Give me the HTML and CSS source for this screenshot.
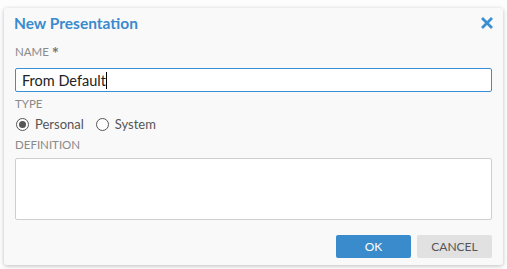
FILE: index.html
```html
<!DOCTYPE html>
<html>
<head>
<meta charset="utf-8">
<link rel="stylesheet" href="styles.css">
</head>
<body>
<div class="backdrop">
  <div class="dialog">
    <div class="header">
      <h1 class="title">New Presentation</h1>
      <button class="close" aria-label="Close">
        <svg width="12" height="12" viewBox="0 0 12 12"><path d="M2 2 L10 10 M10 2 L2 10" stroke="#3a8fd3" stroke-width="2.8" stroke-linecap="square"/></svg>
      </button>
    </div>
    <div class="body">
      <div class="label">NAME <span class="req">*</span></div>
      <div class="input"><span class="value">From Default</span><span class="caret"></span></div>
      <div class="label gap-top">TYPE</div>
      <div class="radios">
        <label class="radio"><span class="circle checked"></span>Personal</label>
        <label class="radio"><span class="circle"></span>System</label>
      </div>
      <div class="label gap-top2">DEFINITION</div>
      <div class="textarea"></div>
    </div>
    <div class="footer">
      <button class="btn ok">OK</button>
      <button class="btn cancel">CANCEL</button>
    </div>
  </div>
</div>
</body>
</html>
```
FILE: styles.css
```css
html, body {
  margin: 0;
  padding: 0;
  background: #fdfdfd;
  font-family: Lato, "Open Sans", sans-serif;
}
.backdrop {
  padding: 8px 4px 4px 4px;
}
.dialog {
  width: 499px;
  height: 257px;
  box-sizing: border-box;
  background: #f9f9f9;
  border-radius: 3px;
  box-shadow: 0 1px 4px rgba(0,0,0,0.25);
  display: flex;
  flex-direction: column;
}
.header {
  display: flex;
  align-items: center;
  justify-content: space-between;
  padding: 4px 10px 0 10px;
  height: 22px;
}
.title {
  margin: 0;
  font-size: 15.5px;
  font-weight: 700;
  color: #3a8bcd;
  line-height: 22px;
}
.close {
  border: 0;
  background: none;
  padding: 0;
  width: 12px;
  height: 12px;
  display: flex;
}
.body {
  padding: 10px 11px 0 11px;
}
.label {
  font-size: 11.5px;
  color: #8a8a8a;
  line-height: 16px;
  height: 16px;
}
.req {
  color: #777;
  font-size: 17px;
  font-weight: 700;
  line-height: 10px;
  vertical-align: -4px;
}
.input {
  margin-top: 8px;
  height: 24px;
  box-sizing: border-box;
  border: 1px solid #3a8fd4;
  border-radius: 2px;
  background: #fff;
  display: flex;
  align-items: center;
  padding-left: 6px;
  font-size: 14.5px;
  color: #222;
}
.caret {
  display: inline-block;
  width: 1px;
  height: 17px;
  background: #000;
}
.gap-top { margin-top: 4px; }
.gap-top2 { margin-top: 5px; }
.radios {
  display: flex;
  gap: 11px;
  margin-top: 4px;
  height: 16px;
  align-items: center;
}
.radio {
  display: flex;
  align-items: center;
  font-size: 13px;
  color: #555;
}
.circle {
  width: 13px;
  height: 13px;
  box-sizing: border-box;
  border: 1.5px solid #555;
  border-radius: 50%;
  margin-right: 6px;
  margin-left: 1px;
  display: flex;
  align-items: center;
  justify-content: center;
  background: #fff;
}
.circle.checked::after {
  content: "";
  width: 7px;
  height: 7px;
  border-radius: 50%;
  background: #555;
}
.textarea {
  margin-top: 5px;
  height: 62px;
  box-sizing: border-box;
  border: 1px solid #cfcfcf;
  border-radius: 2px;
  background: #fff;
}
.footer {
  display: flex;
  justify-content: flex-end;
  gap: 6px;
  padding: 15px 11px 0 11px;
}
.btn {
  width: 75px;
  height: 23px;
  border: 0;
  border-radius: 2px;
  font-family: Lato, "Open Sans", sans-serif;
  font-size: 12px;
  padding: 0;
}
.ok {
  background: #3a8bcb;
  color: #fff;
}
.cancel {
  background: #e1e1e1;
  color: #555;
}
```
